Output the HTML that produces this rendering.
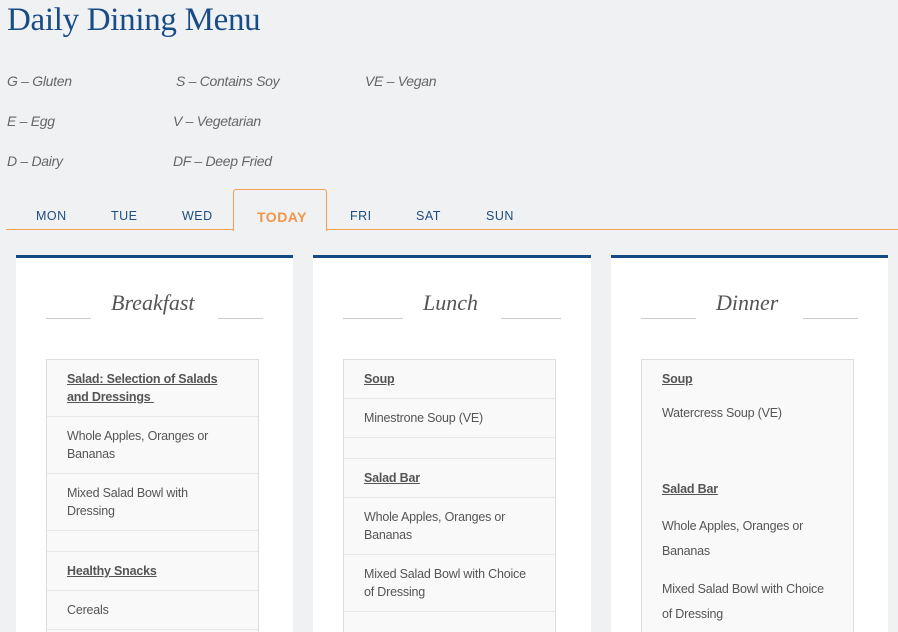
<!DOCTYPE html>
<html style="height:632px;overflow:hidden"><head><style>
body{margin:0;width:898px;height:632px;background:#f0f1f3;position:relative;overflow:hidden;font-family:"Liberation Sans",sans-serif}
.a{position:absolute;white-space:nowrap}
h1{position:absolute;left:7px;top:2px;margin:0;font:400 33px "Liberation Serif",serif;color:#184c86;letter-spacing:-0.3px}
.lg{font-style:italic;font-size:14px;color:#666;line-height:18px;letter-spacing:-0.3px}
.tab{font-size:12.5px;color:#1d4c80;letter-spacing:0.5px;line-height:16px}
.card{position:absolute;top:255px;height:374px;background:#fff;border-top:3px solid #154a84}
.hd{position:absolute;font:italic 22px "Liberation Serif",serif;color:#555;line-height:26px}
.ln{position:absolute;height:1px;background:#ccc}
.box{position:absolute;top:359px;height:280px;background:#f9f9f9;border:1px solid #ddd}
.rb{position:absolute;left:0;right:0;height:1px;background:#e8e8e8}
.it{position:absolute;font-size:12.5px;color:#555;line-height:18px;letter-spacing:-0.2px;white-space:nowrap}
.b{font-weight:bold;text-decoration:underline;color:#555}
</style></head><body>
<h1>Daily Dining Menu</h1>
<div class="a lg" style="left:7px;top:72px">G – Gluten</div>
<div class="a lg" style="left:176px;top:72px">S – Contains Soy</div>
<div class="a lg" style="left:365px;top:72px">VE – Vegan</div>
<div class="a lg" style="left:7px;top:112px">E – Egg</div>
<div class="a lg" style="left:173px;top:112px">V – Vegetarian</div>
<div class="a lg" style="left:7px;top:152px">D – Dairy</div>
<div class="a lg" style="left:173px;top:152px">DF – Deep Fried</div>

<div class="a" style="left:6px;top:229px;width:892px;height:1px;background:#f0a050"></div>
<div class="a" style="left:233px;top:189px;width:92px;height:41px;border:1px solid #f0a050;border-bottom:none;border-radius:3px 3px 0 0;background:#f0f1f3"></div>
<div class="a tab" style="left:36px;top:208px">MON</div>
<div class="a tab" style="left:111px;top:208px">TUE</div>
<div class="a tab" style="left:182px;top:208px">WED</div>
<div class="a tab" style="left:257px;top:209px;color:#f0964a;font-weight:bold;font-size:14px">TODAY</div>
<div class="a tab" style="left:350px;top:208px">FRI</div>
<div class="a tab" style="left:416px;top:208px">SAT</div>
<div class="a tab" style="left:486px;top:208px">SUN</div>

<div class="card" style="left:16px;width:277px"></div>
<div class="card" style="left:313px;width:278px"></div>
<div class="card" style="left:611px;width:277px"></div>

<div class="hd" style="left:111px;top:290px">Breakfast</div>
<div class="ln" style="left:46px;top:318px;width:45px"></div><div class="ln" style="left:218px;top:318px;width:45px"></div>
<div class="hd" style="left:423px;top:290px">Lunch</div>
<div class="ln" style="left:343px;top:318px;width:60px"></div><div class="ln" style="left:501px;top:318px;width:60px"></div>
<div class="hd" style="left:716px;top:290px">Dinner</div>
<div class="ln" style="left:641px;top:318px;width:55px"></div><div class="ln" style="left:803px;top:318px;width:55px"></div>

<div class="box" style="left:46px;width:211px">
<div class="rb" style="top:56px"></div><div class="rb" style="top:113px"></div><div class="rb" style="top:170px"></div><div class="rb" style="top:191px"></div><div class="rb" style="top:230px"></div><div class="rb" style="top:269px"></div>
</div>
<div class="it b" style="left:67px;top:370px">Salad: Selection of Salads<br>and Dressings&nbsp;</div>
<div class="it" style="left:67px;top:427px">Whole Apples, Oranges or<br>Bananas</div>
<div class="it" style="left:67px;top:484px">Mixed Salad Bowl with<br>Dressing</div>
<div class="it b" style="left:67px;top:562px">Healthy Snacks</div>
<div class="it" style="left:67px;top:601px">Cereals</div>

<div class="box" style="left:343px;width:211px">
<div class="rb" style="top:38px"></div><div class="rb" style="top:77px"></div><div class="rb" style="top:98px"></div><div class="rb" style="top:137px"></div><div class="rb" style="top:194px"></div><div class="rb" style="top:251px"></div>
</div>
<div class="it b" style="left:364px;top:370px">Soup</div>
<div class="it" style="left:364px;top:409px">Minestrone Soup (VE)</div>
<div class="it b" style="left:364px;top:469px">Salad Bar</div>
<div class="it" style="left:364px;top:508px">Whole Apples, Oranges or<br>Bananas</div>
<div class="it" style="left:364px;top:565px">Mixed Salad Bowl with Choice<br>of Dressing</div>

<div class="box" style="left:641px;width:211px"></div>
<div class="it b" style="left:662px;top:370px">Soup</div>
<div class="it" style="left:662px;top:404px">Watercress Soup (VE)</div>
<div class="it b" style="left:662px;top:480px">Salad Bar</div>
<div class="it" style="left:662px;top:514px;line-height:25px">Whole Apples, Oranges or<br>Bananas</div>
<div class="it" style="left:662px;top:577px;line-height:25px">Mixed Salad Bowl with Choice<br>of Dressing</div>
</body></html>
